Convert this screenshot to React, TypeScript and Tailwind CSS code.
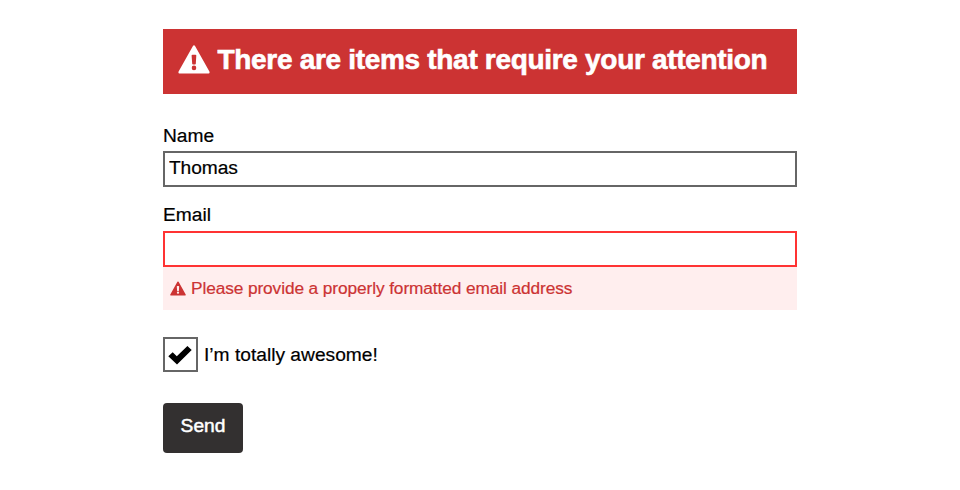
import type { ReactNode } from "react";

function WarningIcon({ className }: { className: string }) {
  return (
    <svg viewBox="0 0 32 29" className={className} aria-hidden="true">
      <path
        fill="currentColor"
        fillRule="evenodd"
        d="M14.8 1.2Q16 -.6 17.2 1.2L31.4 26.6Q32 28.6 30.6 28.6H1.4Q0 28.6 .6 26.6ZM13.6 10.6Q13.6 9.7 14.5 9.7H17.5Q18.4 9.7 18.3 10.6L17.8 18.8Q17.7 19.5 17 19.5H15Q14.3 19.5 14.2 18.8ZM16 20.6A2.3 2.3 0 1 0 16 25.2A2.3 2.3 0 1 0 16 20.6Z"
      />
    </svg>
  );
}

function Label({ children }: { children: ReactNode }) {
  return <span className="block h-[22px] leading-[22px]">{children}</span>;
}

export default function App() {
  return (
    <main className="h-[490px] w-[960px] bg-white pt-[29px] font-['Liberation_Sans',Arial,sans-serif] text-[19.2px] text-black [-webkit-text-stroke:0.2px_currentColor]">
      <form className="mx-auto w-[634px]" onSubmit={(e) => e.preventDefault()}>
        <h1 className="flex h-[65px] bg-[#cc3333] pl-[14.5px] pt-4 text-[28px] leading-[30px] font-bold tracking-[-0.31px] whitespace-nowrap text-white [-webkit-text-stroke:0.6px_currentColor]">
          <WarningIcon className="mr-2 h-[29px] w-8 shrink-0 [-webkit-text-stroke:0]" />
          <span>There are items that require your attention</span>
        </h1>

        <label className="mt-[31px] block">
          <Label>Name</Label>
          <input
            type="text"
            defaultValue="Thomas"
            className="mt-1 block h-9 w-full border-2 border-[#666666] px-1 pb-[3px] tracking-[-0.1px] outline-none"
          />
        </label>

        <label className="mt-[17px] block">
          <Label>Email</Label>
          <input type="text" className="mt-[5px] block h-9 w-full border-2 border-[#ff3333] px-1 outline-none" />
        </label>
        <p className="flex h-[43px] items-center bg-[#ffeeee] pl-[7px] text-[17.3px] tracking-[-0.1px] text-[#cc3333]">
          <WarningIcon className="mr-[5px] h-[15px] w-4" />
          <span>Please provide a properly formatted email address</span>
        </p>

        <label className="mt-[27px] flex h-[35px] items-center">
          <input type="checkbox" defaultChecked className="sr-only" />
          <span className="mr-[6px] flex size-[35px] items-center justify-center border-2 border-[#666666] pr-px">
            <svg viewBox="0 0 24 20" className="h-5 w-6 shrink-0" aria-hidden="true">
              <path d="M.3 11.3L4.7 7.2L8.8 11.2L19.4 1L23.7 5.1L9 19.6Z" />
            </svg>
          </span>
          <span className="pt-[2px]">I’m totally awesome!</span>
        </label>

        <button className="mt-[31px] block h-[50px] w-20 rounded-[4px] bg-[#333030] pb-[4px] text-white [-webkit-text-stroke:0.5px_currentColor]">Send</button>
      </form>
    </main>
  );
}
